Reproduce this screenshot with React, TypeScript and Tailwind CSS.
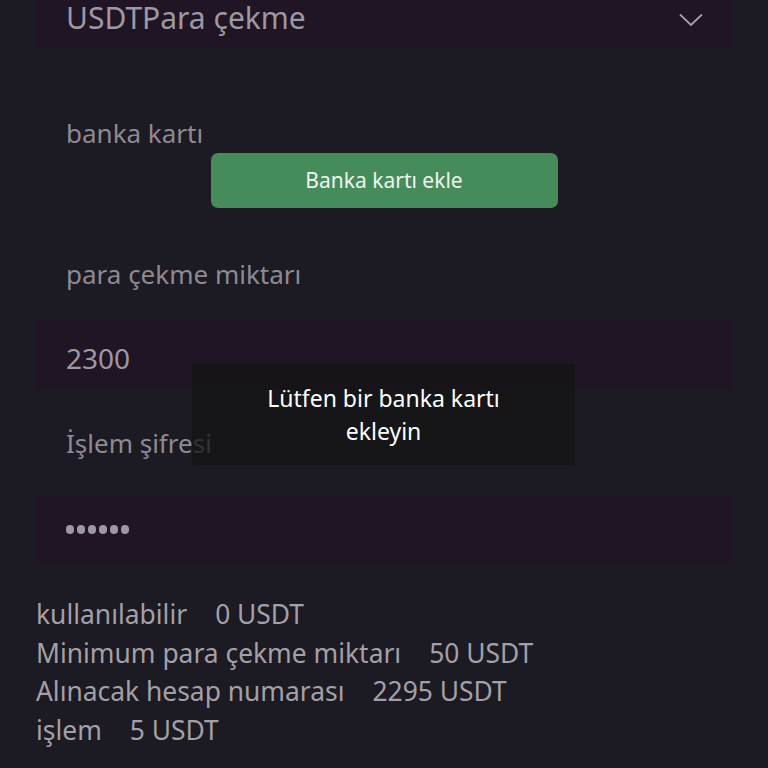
import React from 'react';

const INFO_ROWS = [
  { label: 'kullanılabilir', value: '0 USDT' },
  { label: 'Minimum para çekme miktarı', value: '50 USDT' },
  { label: 'Alınacak hesap numarası', value: '2295 USDT' },
  { label: 'işlem', value: '5 USDT' },
];

export default function App() {
  return (
    <div className="relative w-[768px] h-[768px] overflow-hidden bg-[#1c1a22] font-['Noto_Sans',sans-serif]">
      <div className="flex flex-col px-[36px]">
        {/* currency select, page is scrolled so the top is cut */}
        <div className="-mt-[22px] h-[70px] flex items-center justify-between bg-[#1f1524] pl-[30px] pr-[29px] pt-[10px]">
          <span className="text-[30px] leading-[32px] text-[#9d98a2]">USDTPara çekme</span>
          <svg width="24" height="14" viewBox="0 0 24 14" fill="none" className="mt-[4px]">
            <polyline points="1,1.5 12,12 23,1.5" stroke="#a49fa8" strokeWidth="1.8" />
          </svg>
        </div>

        <div className="mt-[68px] h-[34px] pl-[30px] text-[26px] leading-[34px] text-[#8e8a93]">banka kartı</div>

        <button className="mt-[3px] mx-auto h-[55px] w-[347px] rounded-[7px] bg-[#468c5b] text-[21px] text-[#eef7ef]">
          Banka kartı ekle
        </button>

        <div className="mt-[49px] h-[34px] pl-[30px] text-[26px] leading-[34px] text-[#8e8a93]">para çekme miktarı</div>

        <div className="mt-[29px] h-[70px] flex items-center bg-[#1f1524] pl-[30px] pt-[5px]">
          <span className="text-[28px] text-[#9d98a2]">2300</span>
        </div>

        <div className="mt-[36px] h-[34px] pl-[30px] text-[26px] leading-[34px] text-[#8e8a93]">İşlem şifresi</div>

        <div className="mt-[35px] h-[68px] flex items-center bg-[#1f1524] pl-[30px]">
          <div className="flex gap-[3px]">
            {[0, 1, 2, 3, 4, 5].map((i) => (
              <span key={i} className="block w-[8px] h-[9px] rounded-full bg-[#9d98a2]" />
            ))}
          </div>
        </div>

        <div className="mt-[32px] flex flex-col text-[26.4px] leading-[38.5px] text-[#a3a0a7]">
          {INFO_ROWS.map((row) => (
            <div key={row.label} className="flex">
              <span>{row.label}</span>
              <span className="ml-[28px]">{row.value}</span>
            </div>
          ))}
        </div>
      </div>

      {/* toast */}
      <div className="absolute left-[192px] top-[364px] w-[383px] h-[101px] flex items-center justify-center rounded-[3px] bg-[#141416]/75 px-4">
        <p className="text-center text-[23px] leading-[33px] text-white">
          Lütfen bir banka kartı
          <br />
          ekleyin
        </p>
      </div>
    </div>
  );
}
